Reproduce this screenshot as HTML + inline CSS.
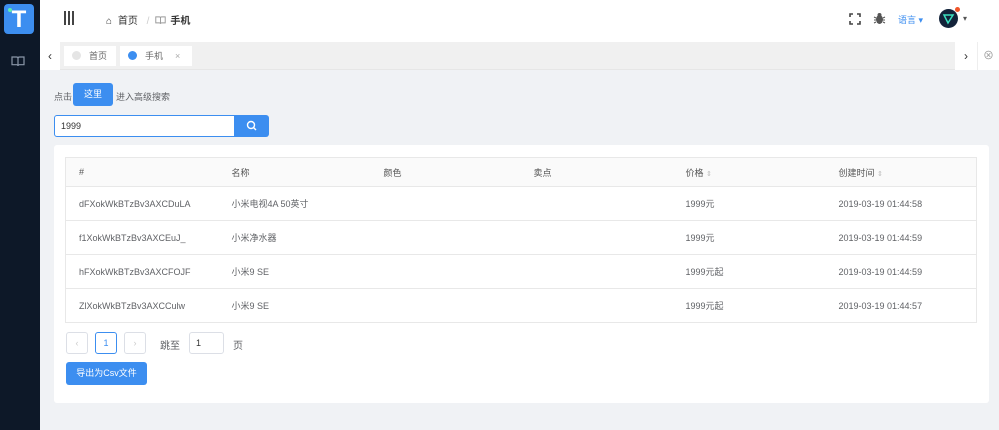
<!DOCTYPE html>
<html><head><meta charset="utf-8"><style>
*{box-sizing:border-box;margin:0;padding:0}
body{width:999px;height:430px;overflow:hidden;background:#f0f2f5;font-family:"Liberation Sans","Noto Sans CJK SC",sans-serif;font-size:9px;color:#606266;position:relative}
.abs{position:absolute}
.side{left:0;top:0;width:40px;height:430px;background:#0d1828}
.logo{left:4px;top:4px;width:30px;height:30px;background:#3c8ef0;border-radius:4px;color:#fff;font-weight:bold;font-size:24px;text-align:center;line-height:31px}
.hdr{left:40px;top:0;width:959px;height:42px;background:#fff}
.tabs{left:40px;top:42px;width:959px;height:28px;background:#f0f0f0;border-bottom:1px solid #e6e6e6}
.tab{top:46px;height:20px;background:#fff;line-height:20px;font-size:9px;color:#666}
.dot{display:inline-block;width:9px;height:9px;border-radius:50%;vertical-align:-1px;margin-right:8px}
.btn{background:#3c8ef0;color:#fff;border-radius:3px;text-align:center}
.card{left:54px;top:145px;width:935px;height:258px;background:#fff;border-radius:3px}
table{position:absolute;left:65px;top:157px;width:912px;border-collapse:collapse;border:1px solid #e8e8e8}
td{height:34px;border-bottom:1px solid #e8e8e8;padding-left:13px;font-size:9px;color:#606266}
tr.h td{height:29px;background:#fafafa;color:#555}
.pg{top:332px;height:22px;border:1px solid #dcdfe6;border-radius:3px;background:#fff;text-align:center;line-height:20px}
.s{color:#bbb;font-size:7px}
</style></head><body>
<div class="abs side"></div>
<div class="abs logo">T<span class="abs" style="left:4px;top:4px;width:4px;height:4px;background:#5ef0b0;border-radius:50%"></span></div>
<svg class="abs" style="left:11px;top:55px" width="14" height="12" viewBox="0 0 14 12" fill="none" stroke="#8a96a8" stroke-width="1.2"><path d="M1 2h4.5c1 0 1.5.6 1.5 1.5V11c0-.8-.6-1.3-1.5-1.3H1zM13 2H8.5C7.5 2 7 2.6 7 3.5V11c0-.8.6-1.3 1.5-1.3H13z"/></svg>
<div class="abs hdr"></div>
<div class="abs" style="left:64px;top:11px;width:2px;height:14px;background:#444;box-shadow:4px 0 #444,8px 0 #444"></div>
<div class="abs" style="left:106px;top:12px;font-size:10px;color:#333">⌂ <span style="margin-left:3px">首页</span> <span style="color:#ccc;margin:0 6px">/</span><svg width="11" height="10" viewBox="0 0 14 12" fill="none" stroke="#999" stroke-width="1.2" style="vertical-align:-1px;margin-right:4px"><path d="M1 2h4.5c1 0 1.5.6 1.5 1.5V11c0-.8-.6-1.3-1.5-1.3H1zM13 2H8.5C7.5 2 7 2.6 7 3.5V11c0-.8.6-1.3 1.5-1.3H13z"/></svg><b>手机</b></div>
<svg class="abs" style="left:849px;top:13px" width="12" height="12" fill="none" stroke="#444" stroke-width="1.6"><path d="M1 4V1h3M8 1h3v3M11 8v3H8M4 11H1V8"/></svg>
<svg class="abs" style="left:873px;top:12px" width="13" height="13" viewBox="0 0 13 13" fill="#555"><ellipse cx="6.5" cy="7.5" rx="3.5" ry="4.5"/><circle cx="6.5" cy="3" r="2"/><path d="M1 5l2 1M1 8h2M1 11l2-1M12 5l-2 1M12 8h-2M12 11l-2-1" stroke="#555" stroke-width="1"/></svg>
<div class="abs" style="left:898px;top:13px;font-size:9px;color:#3c8ef0">语言 ▾</div>
<div class="abs" style="left:939px;top:9px;width:19px;height:19px;border-radius:50%;background:#13233a"><svg width="19" height="19"><path d="M5 6h9l-5 8z" fill="none" stroke="#3ce0c0" stroke-width="1.5"/></svg></div>
<div class="abs" style="left:955px;top:7px;width:5px;height:5px;border-radius:50%;background:#f0552a"></div>
<div class="abs" style="left:963px;top:14px;font-size:8px;color:#555">▾</div>
<div class="abs tabs"></div>
<div class="abs" style="left:40px;top:42px;width:20px;height:28px;background:#fff;text-align:center;line-height:28px;font-size:12px;color:#333">‹</div>
<div class="abs" style="left:955px;top:42px;width:22px;height:28px;background:#fff;text-align:center;line-height:28px;font-size:12px;color:#333">›</div>
<div class="abs" style="left:977px;top:42px;width:22px;height:28px;background:#fff;border-left:1px solid #eee;text-align:center;line-height:28px;font-size:11px;color:#999">⊗</div>
<div class="abs tab" style="left:64px;width:52px;padding-left:8px"><span class="dot" style="background:#e5e5e5"></span>首页</div>
<div class="abs tab" style="left:120px;width:72px;padding-left:8px"><span class="dot" style="background:#3c8ef0"></span>手机<span style="color:#aaa;margin-left:12px">×</span></div>
<div class="abs" style="left:54px;top:90px">点击</div>
<div class="abs btn" style="left:73px;top:83px;width:40px;height:23px;line-height:23px">这里</div>
<div class="abs" style="left:116px;top:90px">进入高级搜索</div>
<div class="abs" style="left:54px;top:115px;width:181px;height:22px;background:#fff;border:1px solid #3c8ef0;border-radius:3px 0 0 3px;padding-left:6px;line-height:20px;color:#333">1999</div>
<div class="abs btn" style="left:234px;top:115px;width:35px;height:22px;border-radius:0 3px 3px 0"><svg width="35" height="22" fill="none" stroke="#fff" stroke-width="1.4"><circle cx="17" cy="10" r="3.5"/><path d="M19.5 12.5l2.5 2.5"/></svg></div>
<div class="abs card"></div>
<table>
<tr class="h"><td style="width:153px">#</td><td style="width:152px">名称</td><td style="width:150px">颜色</td><td style="width:152px">卖点</td><td style="width:153px">价格 <span class="s">⇕</span></td><td>创建时间 <span class="s">⇕</span></td></tr>
<tr><td>dFXokWkBTzBv3AXCDuLA</td><td>小米电视4A 50英寸</td><td></td><td></td><td>1999元</td><td>2019-03-19 01:44:58</td></tr>
<tr><td>f1XokWkBTzBv3AXCEuJ_</td><td>小米净水器</td><td></td><td></td><td>1999元</td><td>2019-03-19 01:44:59</td></tr>
<tr><td>hFXokWkBTzBv3AXCFOJF</td><td>小米9 SE</td><td></td><td></td><td>1999元起</td><td>2019-03-19 01:44:59</td></tr>
<tr><td>ZlXokWkBTzBv3AXCCulw</td><td>小米9 SE</td><td></td><td></td><td>1999元起</td><td>2019-03-19 01:44:57</td></tr>
</table>
<div class="abs pg" style="left:66px;width:22px;color:#ccc">‹</div>
<div class="abs pg" style="left:95px;width:22px;border-color:#3c8ef0;color:#3c8ef0">1</div>
<div class="abs pg" style="left:124px;width:22px;color:#ccc">›</div>
<div class="abs" style="left:160px;top:337px;font-size:10px">跳至</div>
<div class="abs pg" style="left:189px;width:35px;text-align:left;padding-left:6px;color:#333">1</div>
<div class="abs" style="left:233px;top:337px;font-size:10px">页</div>
<div class="abs btn" style="left:66px;top:362px;width:81px;height:23px;line-height:23px">导出为Csv文件</div>
</body></html>
